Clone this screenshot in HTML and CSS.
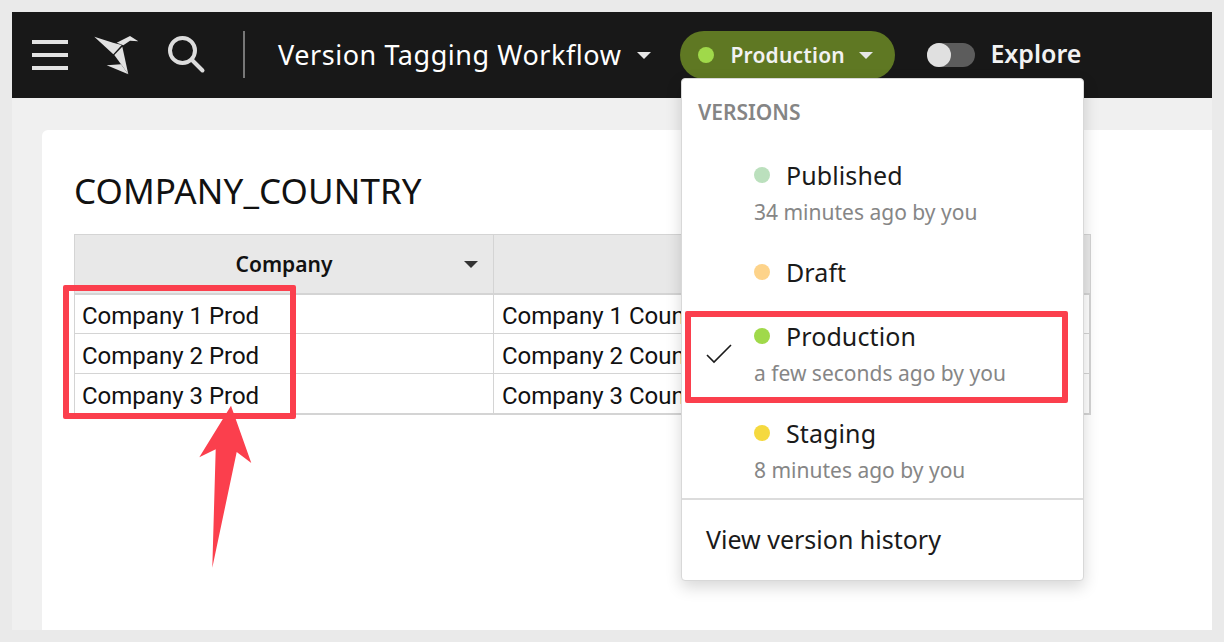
FILE: index.html
```html
<!DOCTYPE html>
<html lang="en">
<head>
    <meta charset="UTF-8">
    <title>Version Tagging Workflow</title>
    <link rel="stylesheet" href="styles.css">
</head>
<body>

    <div class="app">
        <!-- Barra superior -->
        <header class="topbar">
            <div class="burger"><span></span><span></span><span></span></div>
            <svg class="logo" width="46" height="40" viewBox="0 0 46 40">
                <polygon points="0.3,1.7 19,7.7 27.7,10 19.3,19.3" fill="#e2e2e2"/>
                <polygon points="20.3,20 28.3,11.7 34.3,39.3" fill="#e2e2e2"/>
                <polygon points="22.7,7.7 36,1 44.3,6.3 36,5.7 29.3,10.3" fill="#e2e2e2"/>
                <polygon points="12.7,30.3 27,29.3 34.3,39.3" fill="#e2e2e2"/>
            </svg>
            <svg class="search" width="38" height="38" viewBox="0 0 38 38">
                <circle cx="14.5" cy="14.5" r="12.5" fill="none" stroke="#dcdcdc" stroke-width="4"/>
                <line x1="24" y1="24" x2="34.5" y2="34.5" stroke="#dcdcdc" stroke-width="4" stroke-linecap="round"/>
            </svg>
            <div class="divider"></div>
            <div class="title">Version Tagging Workflow</div>
            <span class="caret caret-title"></span>
            <div class="pill">
                <span class="dot dot-production"></span>
                <span class="pill-label">Production</span>
                <span class="caret"></span>
            </div>
            <div class="toggle"><span class="knob"></span></div>
            <div class="explore">Explore</div>
        </header>

        <!-- Contenido -->
        <main class="content">
            <section class="card">
                <h1>COMPANY_COUNTRY</h1>
                <div class="grid">
                    <div class="head first">Company<span class="caret caret-dark"></span></div>
                    <div class="head"></div>
                    <div class="cell first">Company 1 Prod</div>
                    <div class="cell">Company 1 Country</div>
                    <div class="cell first">Company 2 Prod</div>
                    <div class="cell">Company 2 Country</div>
                    <div class="cell first">Company 3 Prod</div>
                    <div class="cell">Company 3 Country</div>
                </div>
            </section>
        </main>
    </div>

    <!-- Menu de versiones -->
    <div class="menu">
        <div class="menu-title">VERSIONS</div>
        <div class="version v-published">
            <span class="dot dot-published"></span>
            <div class="name">Published</div>
            <div class="when">34 minutes ago by you</div>
        </div>
        <div class="version v-draft">
            <span class="dot dot-draft"></span>
            <div class="name">Draft</div>
        </div>
        <div class="version v-production">
            <svg class="check" width="26" height="20" viewBox="0 0 26 20">
                <polyline points="1,11 8,18 25,1" fill="none" stroke="#1a1a1a" stroke-width="1.6"/>
            </svg>
            <span class="dot dot-production"></span>
            <div class="name">Production</div>
            <div class="when">a few seconds ago by you</div>
        </div>
        <div class="version v-staging">
            <span class="dot dot-staging"></span>
            <div class="name">Staging</div>
            <div class="when">8 minutes ago by you</div>
        </div>
        <div class="history">View version history</div>
    </div>

    <!-- Anotaciones -->
    <div class="mark mark-left"></div>
    <div class="mark mark-right"></div>
    <svg class="arrow" width="56" height="166" viewBox="0 0 56 166">
        <polygon points="32,2.7 52.3,60 37.7,49 13.3,164.7 16.7,46.3 0.3,54.3" fill="#fb3f4d"/>
    </svg>

</body>
</html>
```

FILE: styles.css
```css
* {
    margin: 0;
    padding: 0;
    box-sizing: border-box;
}

body {
    font-family: 'Noto Sans', sans-serif;
    background-color: #eaeaea;
    padding: 12px;
    height: 642px;
    overflow: hidden;
    position: relative;
}

.app {
    height: 618px;
    display: flex;
    flex-direction: column;
    background-color: #f0f0f0;
}

/* Barra superior */
.topbar {
    height: 86px;
    flex-shrink: 0;
    background-color: #181818;
    display: flex;
    align-items: center;
    padding-left: 20px;
    color: #fff;
}

.burger {
    width: 36px;
    display: flex;
    flex-direction: column;
    gap: 9px;
}

.burger span {
    height: 4px;
    background-color: #e2e2e2;
}

.logo {
    margin-left: 26px;
}

.search {
    margin-left: 28px;
}

.divider {
    width: 2px;
    height: 47px;
    background-color: #777;
    margin-left: 37px;
    margin-bottom: 2px;
}

.title {
    font-size: 27px;
    margin-left: 33px;
    margin-bottom: 2px;
    letter-spacing: 0.55px;
    white-space: nowrap;
}

.caret {
    display: inline-block;
    width: 0;
    height: 0;
    border-left: 7px solid transparent;
    border-right: 7px solid transparent;
    border-top: 7px solid #e6e6e6;
}

.caret-title {
    margin-left: 16px;
}

.pill {
    width: 215px;
    height: 48px;
    margin-left: 29px;
    background-color: #5f7823;
    border-radius: 24px;
    display: flex;
    align-items: center;
    padding-left: 18px;
}

.pill-label {
    font-size: 21px;
    font-weight: 600;
    letter-spacing: 0.2px;
    color: #f2f2f2;
    margin-left: 16px;
    margin-right: 14px;
}

.dot {
    width: 16px;
    height: 16px;
    border-radius: 50%;
    flex-shrink: 0;
}

.dot-production { background-color: #a0d94a; }
.dot-published { background-color: #bbe0bd; }
.dot-draft { background-color: #fdd38a; }
.dot-staging { background-color: #f5d93f; }

.toggle {
    width: 48px;
    height: 24px;
    margin-left: 32px;
    background-color: #5c5c5c;
    border-radius: 12px;
}

.knob {
    display: block;
    width: 24px;
    height: 24px;
    border-radius: 50%;
    background-color: #e0e0e0;
}

.explore {
    font-size: 25px;
    font-weight: 600;
    margin-left: 15px;
    margin-bottom: 4px;
    color: #f2f2f2;
}

/* Contenido */
.content {
    flex-grow: 1;
    padding: 32px 0 0 30px;
}

.card {
    height: 100%;
    background-color: #fff;
    border-radius: 6px 0 0 0;
    padding: 38px 120px 0 32px;
}

h1 {
    font-size: 35px;
    font-weight: 400;
    letter-spacing: 0.1px;
    color: #111;
    line-height: 46px;
    margin-bottom: 20px;
}

.grid {
    display: grid;
    grid-template-columns: 419px 596px;
    border: 1px solid #d4d4d4;
    border-bottom-width: 2px;
    border-right-width: 2px;
    width: 1017px;
}

.head {
    height: 60px;
    background-color: #e8e8e8;
    border-bottom: 2px solid #d4d4d4;
    display: flex;
    align-items: center;
    justify-content: center;
    position: relative;
    font-size: 21px;
    font-weight: 600;
    color: #111;
}

.head.first,
.cell.first {
    border-right: 1px solid #d4d4d4;
}

.caret-dark {
    position: absolute;
    right: 15px;
    top: 26px;
    border-top-color: #333;
}

.cell {
    height: 40px;
    border-bottom: 1px solid #d4d4d4;
    padding-left: 8px;
    padding-top: 4px;
    display: flex;
    align-items: center;
    font-family: Roboto, sans-serif;
    font-size: 24px;
    color: #111;
    white-space: nowrap;
    overflow: hidden;
}

.cell.first {
    padding-left: 7px;
}

.cell:nth-child(-n+4) {
    height: 39px;
}

.cell:nth-last-child(-n+2) {
    height: 39px;
    border-bottom: none;
}

/* Menu de versiones */
.menu {
    position: absolute;
    left: 681px;
    top: 78px;
    width: 403px;
    height: 503px;
    background-color: #fff;
    border: 1px solid #d8d8d8;
    border-radius: 4px;
    box-shadow: 0 6px 16px rgba(0, 0, 0, 0.16);
}

.menu-title {
    font-size: 21px;
    font-weight: 600;
    color: #858585;
    padding: 19px 0 0 16px;
    line-height: 28px;
}

.version {
    position: relative;
    padding-left: 104px;
}

.version .dot {
    position: absolute;
    left: 72px;
    top: 9px;
}

.check {
    position: absolute;
    left: 24px;
    top: 25px;
}

.name {
    font-size: 25px;
    letter-spacing: 0.1px;
    line-height: 34px;
    color: #1a1a1a;
}

.when {
    font-size: 21px;
    line-height: 36px;
    color: #868686;
    margin-top: 2px;
    margin-left: -32px;
}

.v-published { margin-top: 32px; height: 97px; }
.v-draft { height: 64px; }
.v-production { height: 97px; }
.v-staging { height: 82px; }

.history {
    border-top: 2px solid #dcdcdc;
    padding: 21px 0 0 24px;
    font-size: 25px;
    line-height: 36px;
    color: #1a1a1a;
}

/* Anotaciones */
.mark {
    position: absolute;
    border: 6px solid #fb3f4d;
    border-radius: 2px;
}

.mark-left {
    left: 63px;
    top: 285px;
    width: 233px;
    height: 134px;
}

.mark-right {
    left: 685px;
    top: 311px;
    width: 383px;
    height: 92px;
}

.arrow {
    position: absolute;
    left: 199px;
    top: 403px;
}
```
